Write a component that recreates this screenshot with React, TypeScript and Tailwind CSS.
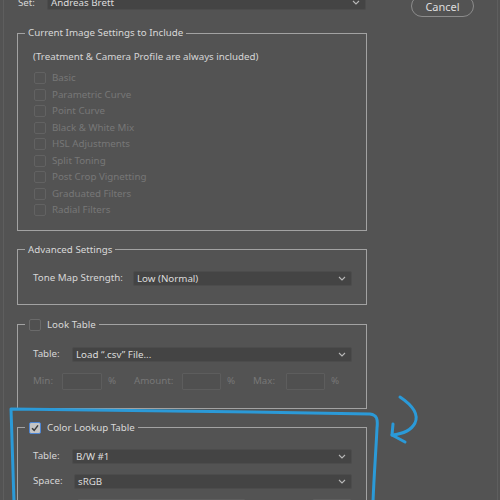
import React from "react";

function Chevron() {
  return (
    <svg width="8" height="5" viewBox="0 0 8 5" className="shrink-0">
      <path d="M1 1 L4 4 L7 1" fill="none" stroke="#b8b8b8" strokeWidth="1.1" />
    </svg>
  );
}

function Select({ value, className }: { value: string; className: string }) {
  return (
    <div className={`flex items-center justify-between h-[15px] bg-[#444444] border border-[#4c4c4c] rounded-[2px] pl-[3px] pr-[5px] text-[#dcdcdc] ${className}`}>
      <span className="leading-[13px] whitespace-nowrap">{value}</span>
      <Chevron />
    </div>
  );
}

function Box({ checked }: { checked?: boolean }) {
  if (checked) {
    return (
      <span className="w-[12px] h-[12px] rounded-[2px] border border-[#4d86d4] bg-[#c4c4c4] flex items-center justify-center shrink-0">
        <svg width="8" height="8" viewBox="0 0 8 8">
          <path d="M1 4.2 L3.2 6.4 L7 1.4" fill="none" stroke="#3c3c3c" strokeWidth="1.5" />
        </svg>
      </span>
    );
  }
  return <span className="w-[12px] h-[12px] rounded-[2px] border border-[#6a6a6a] bg-[#505050] shrink-0" />;
}

const disabledItems = [
  "Basic",
  "Parametric Curve",
  "Point Curve",
  "Black & White Mix",
  "HSL Adjustments",
  "Split Toning",
  "Post Crop Vignetting",
  "Graduated Filters",
  "Radial Filters",
];

export default function App() {
  return (
    <div className="relative w-[500px] h-[500px] overflow-hidden bg-[#535353] pl-[3px] pr-[2px] text-[9.75px] text-[#d6d6d6] whitespace-nowrap font-['Noto_Sans',sans-serif]">
      <div className="h-full border-l border-r border-[#5e5e5e] flex pl-[13px]">
        {/* left column */}
        <div className="w-[350px] shrink-0 -mt-[5px]">
          <div className="flex items-center h-[15px]">
            <span className="w-[30px] pl-[1px] leading-[14px]">Set:</span>
            <Select value="Andreas Brett" className="w-[319px]" />
          </div>

          <fieldset className="mt-[16px] border border-[#a2a2a2] px-0">
            <legend className="ml-[7px] px-[3px] leading-[14px] text-[#d8d8d8]">Current Image Settings to Include</legend>
            <div className="pl-[15px] pt-[10px] pb-[11px]">
              <div className="leading-[14px]">(Treatment &amp; Camera Profile are always included)</div>
              <div className="mt-[6px]">
                {disabledItems.map((t) => (
                  <div key={t} className="flex items-center h-[16.5px] pl-[1px] gap-[6px] text-[#777777]">
                    <span className="w-[12px] h-[12px] rounded-[2px] border border-[#626262] shrink-0" />
                    <span className="leading-[14px]">{t}</span>
                  </div>
                ))}
              </div>
            </div>
          </fieldset>

          <fieldset className="mt-[12px] border border-[#a2a2a2] px-0">
            <legend className="ml-[7px] px-[3px] leading-[14px] text-[#d8d8d8]">Advanced Settings</legend>
            <div className="pl-[15px] pt-[14px] pb-[18px] flex items-center">
              <span className="w-[100px] leading-[14px]">Tone Map Strength:</span>
              <Select value="Low (Normal)" className="w-[219px]" />
            </div>
          </fieldset>

          <fieldset className="mt-[13px] border border-[#a2a2a2] px-0">
            <legend className="ml-[7px] pl-[4px] pr-[3px] leading-[14px] text-[#d8d8d8]">
              <span className="flex items-center gap-[6px] h-[14px]">
                <Box />
                <span>Look Table</span>
              </span>
            </legend>
            <div className="pl-[15px] pt-[15px] pb-[18px]">
              <div className="flex items-center">
                <span className="w-[39px] leading-[14px]">Table:</span>
                <Select value={"Load \u201c.csv\u201d File..."} className="w-[280px]" />
              </div>
              <div className="mt-[11px] flex items-center text-[#777777] leading-[14px]">
                <span className="w-[29px]">Min:</span>
                <span className="w-[40px] h-[17px] border border-[#5d5d5d] bg-[#505050] rounded-[1px]" />
                <span className="w-[32px] pl-[6px]">%</span>
                <span className="w-[48px]">Amount:</span>
                <span className="w-[39px] h-[17px] border border-[#5d5d5d] bg-[#505050] rounded-[1px]" />
                <span className="w-[32px] pl-[6px]">%</span>
                <span className="w-[33px]">Max:</span>
                <span className="w-[39px] h-[17px] border border-[#5d5d5d] bg-[#505050] rounded-[1px]" />
                <span className="pl-[6px]">%</span>
              </div>
            </div>
          </fieldset>

          <fieldset className="mt-[12px] border border-[#a2a2a2] px-0">
            <legend className="ml-[7px] pl-[4px] pr-[3px] leading-[14px] text-[#d8d8d8]">
              <span className="flex items-center gap-[6px] h-[14px]">
                <Box checked />
                <span>Color Lookup Table</span>
              </span>
            </legend>
            <div className="pl-[15px] pt-[14px] pb-[20px]">
              <div className="flex items-center">
                <span className="w-[39px] leading-[14px]">Table:</span>
                <Select value="B/W #1" className="w-[280px]" />
              </div>
              <div className="mt-[10px] flex items-center">
                <span className="w-[41px] leading-[14px]">Space:</span>
                <Select value="sRGB" className="w-[278px]" />
              </div>
              <div className="mt-[10px] flex items-center">
                <span className="w-[44px] h-[15px]" />
                <span className="w-[169px] h-[15px] border border-[#5d5d5d] bg-[#4c4c4c] rounded-[2px]" />
                <span className="ml-[66px] w-[40px] h-[15px] border border-[#5d5d5d] bg-[#4c4c4c] rounded-[2px]" />
              </div>
            </div>
          </fieldset>
        </div>

        {/* right column */}
        <div className="ml-[44px] -mt-[5px]">
          <button className="w-[63px] h-[22px] rounded-full border border-[#8c8c8c] text-[#dedede] text-[11px] leading-[14px] pt-[1px]">Cancel</button>
        </div>
      </div>

      {/* hand-drawn annotation */}
      <svg className="absolute inset-0 pointer-events-none" width="500" height="500" viewBox="0 0 500 500">
        <g fill="none" stroke="#2b9ad8" strokeWidth="3" strokeLinecap="round" strokeLinejoin="round">
          <path d="M14 502 C13 470 12 440 11 409 C120 410 250 412 370 414 C377 415 378 419 377 428 C376 450 374 475 373 502" />
          <path d="M400 397 C412 405 419 414 415 423 C411 431 402 434 392 435" />
          <path d="M393 424 L392 435 L405 442" />
        </g>
      </svg>
    </div>
  );
}
